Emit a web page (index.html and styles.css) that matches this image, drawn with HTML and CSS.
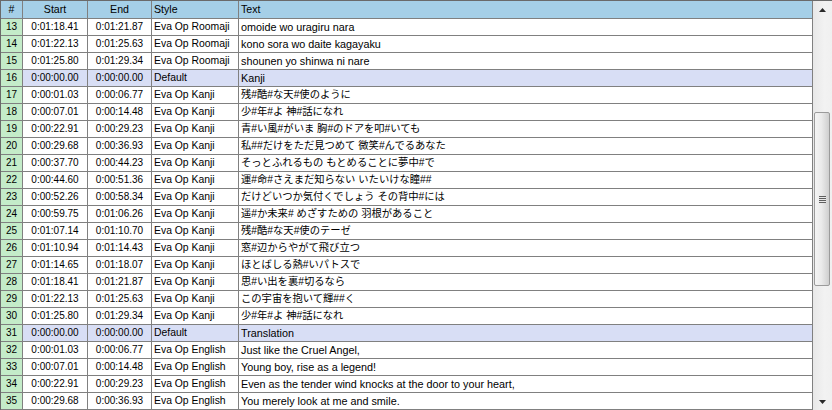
FILE: index.html
```html
<!DOCTYPE html>
<html>
<head>
<meta charset="utf-8">
<link rel="stylesheet" href="styles.css">
</head>
<body>
<div class="wrap">
  <div class="grid">
    <div class="row head">
      <div class="c num">#</div><div class="c tm">Start</div><div class="c tm">End</div><div class="c st">Style</div><div class="c tx">Text</div>
    </div>
    <div class="row"><div class="c num">13</div><div class="c tm">0:01:18.41</div><div class="c tm">0:01:21.87</div><div class="c st">Eva Op Roomaji</div><div class="c tx">omoide wo uragiru nara</div></div>
    <div class="row"><div class="c num">14</div><div class="c tm">0:01:22.13</div><div class="c tm">0:01:25.63</div><div class="c st">Eva Op Roomaji</div><div class="c tx">kono sora wo daite kagayaku</div></div>
    <div class="row"><div class="c num">15</div><div class="c tm">0:01:25.80</div><div class="c tm">0:01:29.34</div><div class="c st">Eva Op Roomaji</div><div class="c tx">shounen yo shinwa ni nare</div></div>
    <div class="row cm"><div class="c num">16</div><div class="c tm">0:00:00.00</div><div class="c tm">0:00:00.00</div><div class="c st">Default</div><div class="c tx">Kanji</div></div>
    <div class="row"><div class="c num">17</div><div class="c tm">0:00:01.03</div><div class="c tm">0:00:06.77</div><div class="c st">Eva Op Kanji</div><div class="c tx jp">残#酷#な天#使のように</div></div>
    <div class="row"><div class="c num">18</div><div class="c tm">0:00:07.01</div><div class="c tm">0:00:14.48</div><div class="c st">Eva Op Kanji</div><div class="c tx jp">少#年#よ 神#話になれ</div></div>
    <div class="row"><div class="c num">19</div><div class="c tm">0:00:22.91</div><div class="c tm">0:00:29.23</div><div class="c st">Eva Op Kanji</div><div class="c tx jp">青#い風#がいま 胸#のドアを叩#いても</div></div>
    <div class="row"><div class="c num">20</div><div class="c tm">0:00:29.68</div><div class="c tm">0:00:36.93</div><div class="c st">Eva Op Kanji</div><div class="c tx jp">私##だけをただ見つめて 微笑#んでるあなた</div></div>
    <div class="row"><div class="c num">21</div><div class="c tm">0:00:37.70</div><div class="c tm">0:00:44.23</div><div class="c st">Eva Op Kanji</div><div class="c tx jp">そっとふれるもの もとめることに夢中#で</div></div>
    <div class="row"><div class="c num">22</div><div class="c tm">0:00:44.60</div><div class="c tm">0:00:51.36</div><div class="c st">Eva Op Kanji</div><div class="c tx jp">運#命#さえまだ知らない いたいけな瞳##</div></div>
    <div class="row"><div class="c num">23</div><div class="c tm">0:00:52.26</div><div class="c tm">0:00:58.34</div><div class="c st">Eva Op Kanji</div><div class="c tx jp">だけどいつか気付くでしょう その背中#には</div></div>
    <div class="row"><div class="c num">24</div><div class="c tm">0:00:59.75</div><div class="c tm">0:01:06.26</div><div class="c st">Eva Op Kanji</div><div class="c tx jp">遥#か未来# めざすための 羽根があること</div></div>
    <div class="row"><div class="c num">25</div><div class="c tm">0:01:07.14</div><div class="c tm">0:01:10.70</div><div class="c st">Eva Op Kanji</div><div class="c tx jp">残#酷#な天#使のテーゼ</div></div>
    <div class="row"><div class="c num">26</div><div class="c tm">0:01:10.94</div><div class="c tm">0:01:14.43</div><div class="c st">Eva Op Kanji</div><div class="c tx jp">窓#辺からやがて飛び立つ</div></div>
    <div class="row"><div class="c num">27</div><div class="c tm">0:01:14.65</div><div class="c tm">0:01:18.07</div><div class="c st">Eva Op Kanji</div><div class="c tx jp">ほとばしる熱#いパトスで</div></div>
    <div class="row"><div class="c num">28</div><div class="c tm">0:01:18.41</div><div class="c tm">0:01:21.87</div><div class="c st">Eva Op Kanji</div><div class="c tx jp">思#い出を裏#切るなら</div></div>
    <div class="row"><div class="c num">29</div><div class="c tm">0:01:22.13</div><div class="c tm">0:01:25.63</div><div class="c st">Eva Op Kanji</div><div class="c tx jp">この宇宙を抱いて輝##く</div></div>
    <div class="row"><div class="c num">30</div><div class="c tm">0:01:25.80</div><div class="c tm">0:01:29.34</div><div class="c st">Eva Op Kanji</div><div class="c tx jp">少#年#よ 神#話になれ</div></div>
    <div class="row cm"><div class="c num">31</div><div class="c tm">0:00:00.00</div><div class="c tm">0:00:00.00</div><div class="c st">Default</div><div class="c tx">Translation</div></div>
    <div class="row"><div class="c num">32</div><div class="c tm">0:00:01.03</div><div class="c tm">0:00:06.77</div><div class="c st">Eva Op English</div><div class="c tx">Just like the Cruel Angel,</div></div>
    <div class="row"><div class="c num">33</div><div class="c tm">0:00:07.01</div><div class="c tm">0:00:14.48</div><div class="c st">Eva Op English</div><div class="c tx">Young boy, rise as a legend!</div></div>
    <div class="row"><div class="c num">34</div><div class="c tm">0:00:22.91</div><div class="c tm">0:00:29.23</div><div class="c st">Eva Op English</div><div class="c tx">Even as the tender wind knocks at the door to your heart,</div></div>
    <div class="row"><div class="c num">35</div><div class="c tm">0:00:29.68</div><div class="c tm">0:00:36.93</div><div class="c st">Eva Op English</div><div class="c tx">You merely look at me and smile.</div></div>
  </div>
  <div class="sb">
    <div class="sb-btn"><svg width="7" height="4" viewBox="0 0 7 4"><polygon points="3.5,0 7,4 0,4" fill="#2a2a2a"/></svg></div>
    <div class="sb-track"><div class="thumb"><div class="grip"></div></div></div>
    <div class="sb-btn"><svg width="7" height="4" viewBox="0 0 7 4"><polygon points="0,0 7,0 3.5,4" fill="#2a2a2a"/></svg></div>
  </div>
</div>
</body>
</html>
```
FILE: styles.css
```css
* { box-sizing: border-box; }
html, body { margin: 0; padding: 0; background: #ffffff; }
.wrap {
  display: flex;
  width: 832px;
  height: 410px;
  border-top: 1px solid #6a6a6a;
  overflow: hidden;
}
.grid {
  width: 813px;
  border-left: 1px solid #6a6a6a;
  display: flex;
  flex-direction: column;
}
.row {
  display: grid;
  grid-template-columns: 22px 65px 64px 87px 574px;
  height: 17px;
  border-bottom: 1px solid #808080;
  background: #ffffff;
}
.row.head { height: 18px; background: #a5cfe7; }
.row.cm { background: #d8def5; }
.c {
  height: 16px;
  line-height: 16px;
  padding: 0 2px;
  border-right: 1px solid #808080;
  white-space: nowrap;
  overflow: hidden;
  color: #000000;
  font-family: "Liberation Sans", "Noto Sans CJK JP", sans-serif;
  font-size: 10px;
}
.head .c { height: 17px; line-height: 17px; font-size: 10.6px; }
.num { text-align: center; background: #c4ecc9; padding: 0; }
.head .num { background: transparent; }
.tm { text-align: center; }
.st { font-size: 10.4px; }
.tx { font-size: 10.8px; }
.tx.jp { font-size: 10.3px; }
.sb {
  width: 19px;
  display: flex;
  flex-direction: column;
  background: linear-gradient(to right, #e8e8e8, #f2f2f2 60%, #f0f0f0);
}
.sb-btn {
  height: 17px;
  display: flex;
  align-items: center;
  justify-content: center;
  padding-right: 1px;
}
.sb-btn svg { display: block; }
.sb-track { flex: 1; }
.thumb {
  margin: 94px 2px 0 1px;
  height: 174px;
  border: 1px solid #9b9b9b;
  border-radius: 2px;
  background: linear-gradient(to right, #f4f4f4, #ebebeb 45%, #dcdcdc 75%, #cfcfcf);
  display: flex;
  align-items: center;
  justify-content: center;
}
.grip {
  width: 7px;
  height: 7px;
  background: repeating-linear-gradient(to bottom, #5e5e5e 0, #5e5e5e 1px, #e8e8e8 1px, #e8e8e8 2px);
}
```
